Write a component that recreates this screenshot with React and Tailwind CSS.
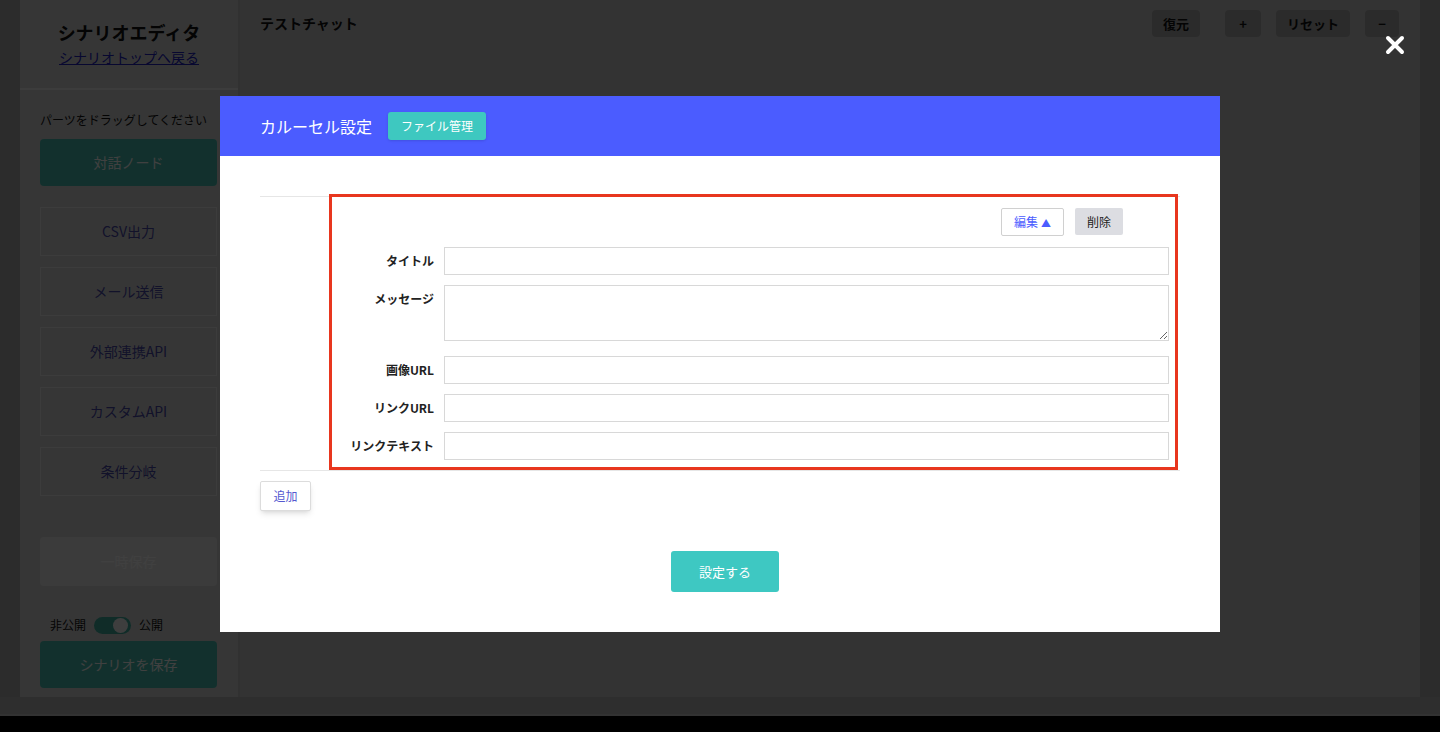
import React from 'react'

const parts = ['CSV出力', 'メール送信', '外部連携API', 'カスタムAPI', '条件分岐']

const fields = [
  { label: 'リンクURL' },
  { label: 'リンクテキスト' },
]

const Sidebar = () => {
  return (
    <div className='w-[218px] h-full bg-[#d8d8d8] flex flex-col'>
      <div className='h-[90px] border-b-2 border-[#f0f0f0] flex flex-col items-center pt-[20px]'>
        <h1 className='text-[18px] font-bold text-[#111] leading-[24px]'>シナリオエディタ</h1>
        <a className='text-[14px] text-[#2020c0] underline leading-[20px] mt-[3px]'>シナリオトップへ戻る</a>
      </div>
      <div className='px-5 pr-[21px] flex flex-col'>
        <p className='text-[12px] text-[#111] mt-[21px] leading-[18px]'>パーツをドラッグしてください</p>
        <div className='mt-[10px] h-[47px] bg-[#48c0b4] rounded-sm flex items-center justify-center text-[14px] text-white'>対話ノード</div>
        <div className='mt-[21px] flex flex-col gap-[11px]'>
          {parts.map((p) => (
            <div key={p} className='h-[49px] bg-[#d8d8d8] border border-[#f0f0f0] flex items-center justify-center text-[14px] text-[#4848a8]'>{p}</div>
          ))}
        </div>
        <div className='mt-[41px] h-[49px] bg-[#ececec] rounded-sm flex items-center justify-center text-[14px] text-white'>一時保存</div>
        <div className='mt-[30px] flex items-center gap-2 pl-[10px] text-[12px] text-[#111]'>
          <span>非公開</span>
          <span className='relative w-[37px] h-[17px] rounded-full bg-[#40b0a0]'>
            <span className='absolute right-[3px] top-[1px] w-[15px] h-[15px] rounded-full bg-[#f8f8f8]' />
          </span>
          <span>公開</span>
        </div>
        <div className='mt-[7px] h-[47px] bg-[#48c0b4] rounded-sm flex items-center justify-center text-[14px] text-white'>シナリオを保存</div>
      </div>
    </div>
  )
}

const MainPane = () => {
  return (
    <div className='flex-1 h-full bg-[#cccccc] flex justify-between pl-5 pr-[21px] pt-[10px]'>
      <h2 className='text-[14px] font-bold text-[#111] leading-[26px]'>テストチャット</h2>
      <div className='flex items-start text-[13px] font-bold text-[#111]'>
        <button className='w-[48px] h-[27px] bg-[#acacac] rounded-sm'>復元</button>
        <button className='ml-[25px] w-[36px] h-[27px] bg-[#acacac] rounded-sm'>+</button>
        <button className='ml-[15px] w-[74px] h-[27px] bg-[#acacac] rounded-sm'>リセット</button>
        <button className='ml-[15px] w-[34px] h-[27px] bg-[#acacac] rounded-sm'>−</button>
      </div>
    </div>
  )
}

const Row = ({ label, children, className = '' }) => (
  <div className={`flex ${className}`}>
    <div className='w-[102px] shrink-0 text-right text-[12px] font-bold text-[#222] leading-[18px] pt-[5px]'>{label}</div>
    <div className='ml-[10px] flex-1'>{children}</div>
  </div>
)

const CarouselModal = () => {
  return (
    <div className='absolute left-[220px] top-[96px] w-[1000px] h-[536px] bg-white flex flex-col'>
      <div className='h-[60px] bg-[#4b5cff] flex items-center px-10 gap-[16px]'>
        <span className='text-[16px] text-white'>カルーセル設定</span>
        <button className='w-[98px] h-[28px] bg-[#3ec8c0] rounded-[3px] text-[12px] text-white shadow-sm'>ファイル管理</button>
      </div>
      <div className='px-10 pt-[40px]'>
        <div className='border-t border-b border-[#e6e6e6] flex'>
          <div className='w-[69px] shrink-0' />
          <div className='-mt-[3px] w-[849px] border-[3px] border-[#e8361e] pr-[6px] pt-[11px] pb-[7px]'>
            <div className='flex justify-end gap-[11px] pr-[46px]'>
              <button className='w-[63px] h-[28px] border border-[#d0d0d0] rounded-[2px] bg-white text-[12px] text-[#4b5cff] flex items-center justify-center gap-[3px]'>
                編集<span className='text-[10px]'>▲</span>
              </button>
              <button className='w-[48px] h-[27px] bg-[#dcdde2] rounded-[2px] text-[12px] text-[#222]'>削除</button>
            </div>
            <Row label='タイトル' className='mt-[11px]'>
              <input className='w-full h-[28px] border border-[#d8d8d8] outline-none' />
            </Row>
            <Row label='メッセージ' className='mt-[10px]'>
              <textarea className='block w-full h-[56px] border border-[#d8d8d8] outline-none' />
            </Row>
            <Row label='画像URL' className='mt-[15px]'>
              <input className='w-full h-[28px] border border-[#d8d8d8] outline-none' />
            </Row>
            {fields.map((f) => (
              <Row key={f.label} label={f.label} className='mt-[10px]'>
                <input className='w-full h-[28px] border border-[#d8d8d8] outline-none' />
              </Row>
            ))}
          </div>
        </div>
        <button className='mt-[10px] w-[51px] h-[30px] border border-[#dcdcdc] rounded-[2px] bg-white shadow-md text-[12px] text-[#5558d0]'>追加</button>
        <div className='flex justify-center pl-[10px] mt-[40px]'>
          <button className='w-[108px] h-[41px] bg-[#3ec8c2] rounded-[3px] text-[13px] text-white'>設定する</button>
        </div>
      </div>
    </div>
  )
}

const App = () => {
  return (
    <div className='relative w-full h-[732px] overflow-hidden bg-black' style={{ fontFamily: '"Noto Sans CJK JP", "Noto Sans", sans-serif' }}>
      <div className='flex flex-col'>
        <div className='h-[697px] flex bg-[#b0b0b0]'>
          <div className='w-[20px]' />
          <Sidebar />
          <div className='w-[2px] bg-[#c4c4c4]' />
          <MainPane />
          <div className='w-[20px]' />
        </div>
        <div className='h-[19px] bg-[#b8b8b8] border-b-2 border-[#c8c8c8]' />
      </div>
      <div className='absolute inset-x-0 top-0 h-[716px] bg-black/75' />
      <CarouselModal />
      <svg className='absolute left-[1385px] top-[35px]' width='20' height='20' viewBox='0 0 20 20'>
        <path d='M3 3 L17 17 M17 3 L3 17' stroke='white' strokeWidth='4' strokeLinecap='round' />
      </svg>
    </div>
  )
}

export default App
